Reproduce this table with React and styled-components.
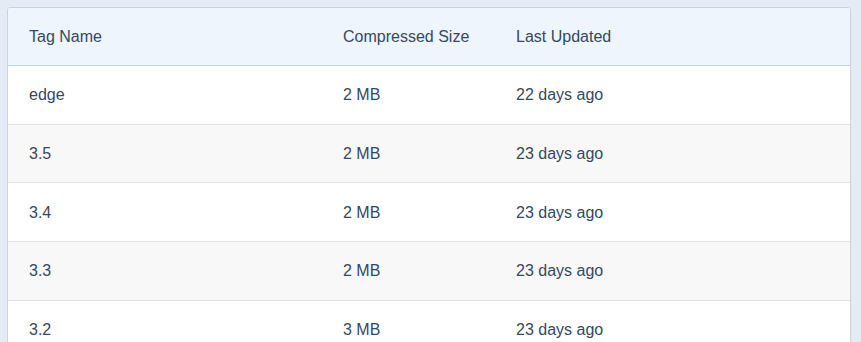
import styled, { createGlobalStyle } from 'styled-components';

const GlobalStyle = createGlobalStyle`
  html, body {
    margin: 0;
    padding: 0;
    background: #e4ebf5;
  }
  body {
    font-family: 'Liberation Sans', Arial, Helvetica, sans-serif;
    font-size: 16px;
    color: #34495e;
  }
`;

const tags = [
  { name: 'edge', size: '2 MB', updated: '22 days ago' },
  { name: '3.5', size: '2 MB', updated: '23 days ago' },
  { name: '3.4', size: '2 MB', updated: '23 days ago' },
  { name: '3.3', size: '2 MB', updated: '23 days ago' },
  { name: '3.2', size: '3 MB', updated: '23 days ago' },
];

const App = () => {
  return (
    <>
      <GlobalStyle />
      <StPage>
        <StCard>
          <StHeaderRow>
            <StCell>Tag Name</StCell>
            <StCell>Compressed Size</StCell>
            <StCell>Last Updated</StCell>
          </StHeaderRow>
          {tags.map((tag, i) => (
            <StRow key={tag.name} $striped={i % 2 === 1}>
              <StCell>{tag.name}</StCell>
              <StCell>{tag.size}</StCell>
              <StCell>{tag.updated}</StCell>
            </StRow>
          ))}
        </StCard>
      </StPage>
    </>
  );
};

export default App;

const StPage = styled.div`
  height: 342px;
  padding: 7px 10px 0 7px;
  box-sizing: border-box;
  overflow: hidden;
`;

const StCard = styled.div`
  border: 1px solid #c9d3df;
  border-radius: 3px;
  background: #ffffff;
  overflow: hidden;
`;

const StHeaderRow = styled.div`
  display: grid;
  grid-template-columns: 314px 173px 1fr;
  padding: 18px 21px 17px;
  line-height: 22px;

  background: #eef5fd;
  border-bottom: 1px solid #c7d2df;
`;

const StRow = styled.div`
  display: grid;
  grid-template-columns: 314px 173px 1fr;
  padding: 18.33px 21px 17.33px;
  line-height: 22px;

  background: ${({ $striped }) => ($striped ? '#f8f8f8' : '#ffffff')};
  border-bottom: 1px solid #e2e2e2;
`;

const StCell = styled.div`
  color: #34495e;
  white-space: nowrap;
`;
